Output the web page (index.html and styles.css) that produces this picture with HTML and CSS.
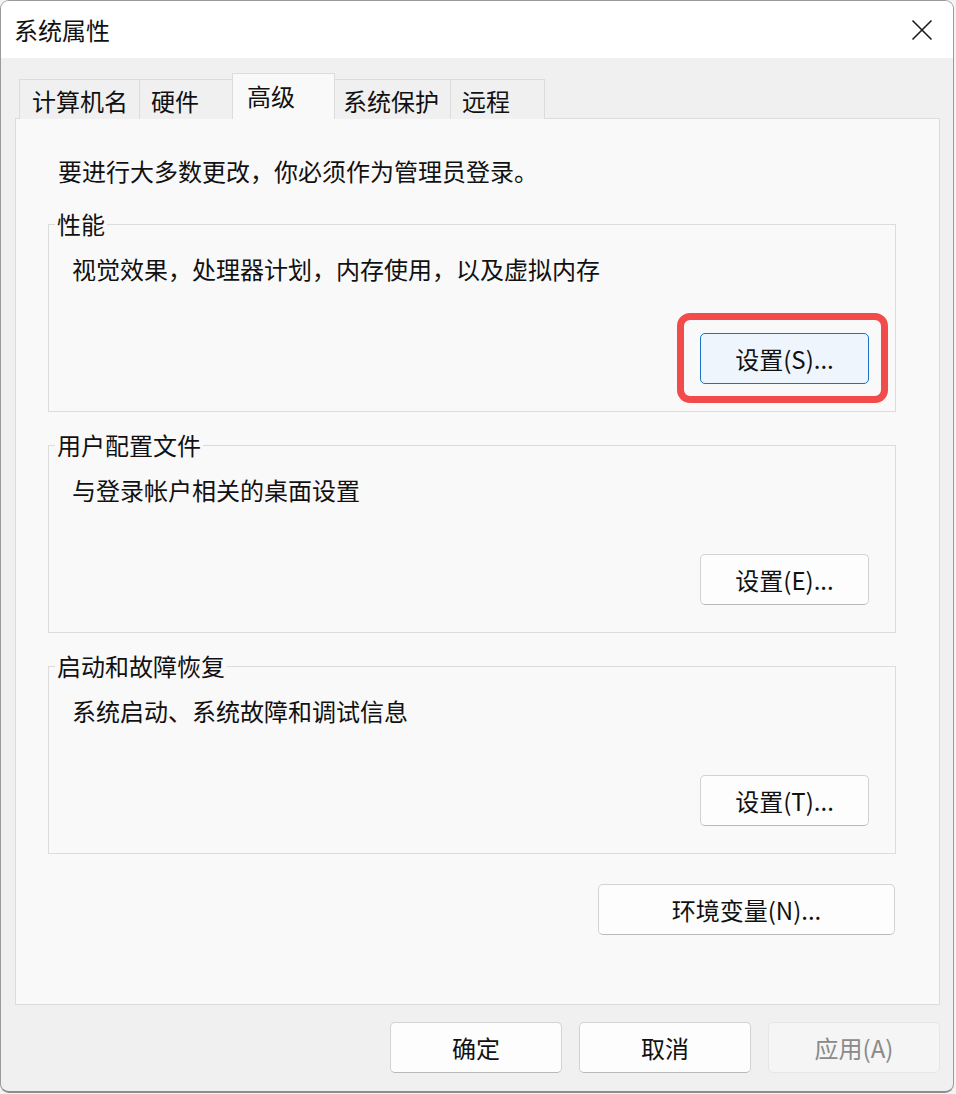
FILE: index.html
```html
<!DOCTYPE html>
<html lang="zh-CN">
<head>
<meta charset="utf-8">
<title>系统属性</title>
<link rel="stylesheet" href="styles.css">
</head>
<body>
<div class="window">
  <div class="titlebar">
    <span class="title">系统属性</span>
    <span class="close" aria-label="关闭">
      <svg width="22" height="22" viewBox="0 0 22 22"><path d="M1.5 1.5 L20.5 20.5 M20.5 1.5 L1.5 20.5" stroke="#1b1b1b" stroke-width="1.6" fill="none"/></svg>
    </span>
  </div>
  <div class="main">
    <div class="tabs">
      <div class="tab t1">计算机名</div>
      <div class="tab t2">硬件</div>
      <div class="tab t3 active">高级</div>
      <div class="tab t4">系统保护</div>
      <div class="tab t5">远程</div>
    </div>
    <div class="panel">
      <p class="intro">要进行大多数更改，你必须作为管理员登录。</p>
      <fieldset class="group">
        <legend>性能</legend>
        <p class="desc">视觉效果，处理器计划，内存使用，以及虚拟内存</p>
        <div class="btnrow"><button class="btn focus">设置(S)...</button></div>
      </fieldset>
      <fieldset class="group">
        <legend>用户配置文件</legend>
        <p class="desc">与登录帐户相关的桌面设置</p>
        <div class="btnrow"><button class="btn">设置(E)...</button></div>
      </fieldset>
      <fieldset class="group">
        <legend>启动和故障恢复</legend>
        <p class="desc">系统启动、系统故障和调试信息</p>
        <div class="btnrow"><button class="btn">设置(T)...</button></div>
      </fieldset>
      <div class="envrow"><button class="btn env">环境变量(N)...</button></div>
    </div>
    <div class="footer">
      <button class="btn wide">确定</button>
      <button class="btn wide">取消</button>
      <button class="btn wide disabled">应用(A)</button>
    </div>
  </div>
</div>
</body>
</html>
```

FILE: styles.css
```css
html, body {
  margin: 0;
  padding: 0;
}
body {
  background: #f3f3f3;
  font-family: "Noto Sans CJK SC", "Noto Sans", sans-serif;
  font-size: 24px;
  color: #111;
}
.window {
  width: 954px;
  height: 1093px;
  box-sizing: border-box;
  border: 1px solid #9a9a9a;
  border-bottom: 2px solid #8e8e8e;
  border-radius: 9px;
  overflow: hidden;
  background: #f0f0f0;
  display: flex;
  flex-direction: column;
}
.titlebar {
  height: 57px;
  background: #ffffff;
  display: flex;
  align-items: center;
  justify-content: space-between;
  padding: 0 20px 0 13px;
  flex: none;
}
.title {
  line-height: 30px;
  padding-top: 1px;
}
.close {
  display: flex;
  width: 22px;
  height: 22px;
}
.main {
  flex: 1;
  display: flex;
  flex-direction: column;
  padding: 16px 13px 0 14px;
}
.tabs {
  display: flex;
  align-items: flex-end;
  height: 45px;
  padding-left: 4px;
  margin-bottom: -1px;
  position: relative;
  z-index: 1;
}
.tab {
  box-sizing: border-box;
  height: 40px;
  border: 1px solid #dcdcdc;
  border-bottom: none;
  background: #f0f0f0;
  line-height: 30px;
  padding-top: 6px;
  white-space: nowrap;
  margin-left: -1px;
}
.t1 { width: 121px; padding-left: 12px; margin-left: 0; }
.t2 { width: 94px; padding-left: 11px; }
.t3 { width: 103px; padding-left: 14px; }
.t4 { width: 117px; padding-left: 8px; }
.t5 { width: 95px; padding-left: 11px; }
.tab.active {
  height: 46px;
  background: #f9f9f9;
  padding-top: 7px;
  position: relative;
  z-index: 2;
}
.panel {
  box-sizing: border-box;
  height: 887px;
  border: 1px solid #dcdcdc;
  background: #f9f9f9;
  padding: 37px 43px 0 32px;
  display: flex;
  flex-direction: column;
}
.intro {
  margin: 0 0 24px 10px;
  line-height: 30px;
}
.group {
  margin: 0 0 19px 0;
  padding: 0 0 27px 0;
  border: 1px solid #dcdcdc;
  border-radius: 0;
  min-width: 0;
}
.group legend {
  margin-left: 6px;
  padding: 0 2px;
  line-height: 28px;
}
.desc {
  margin: 16px 0 0 0;
  padding-left: 23px;
  line-height: 30px;
}
.btnrow {
  display: flex;
  justify-content: flex-end;
  margin-top: 49px;
  padding-right: 26px;
}
.btn {
  font-family: inherit;
  font-size: 24px;
  color: #111;
  box-sizing: border-box;
  width: 169px;
  height: 51px;
  background: #fdfdfd;
  border: 1px solid #d2d2d2;
  border-bottom-color: #b9b9b9;
  border-radius: 5px;
  padding: 0;
  line-height: 30px;
  position: relative;
}
.btn.focus {
  background: #eff5fc;
  border: 1px solid #1a73c8;
}
.btn.focus::after {
  content: "";
  position: absolute;
  top: -21px;
  left: -24px;
  right: -20px;
  bottom: -20px;
  border: 7px solid #f24b4b;
  border-radius: 13px;
}
.envrow {
  display: flex;
  justify-content: flex-end;
  margin: 11px 1px 0 0;
}
.btn.env {
  width: 297px;
}
.footer {
  display: flex;
  justify-content: flex-end;
  gap: 17px;
  padding-top: 17px;
}
.btn.wide {
  width: 172px;
}
.btn.disabled {
  background: #f5f5f5;
  border: 1px solid #e6e6e6;
  color: #8a8a8a;
}
```
